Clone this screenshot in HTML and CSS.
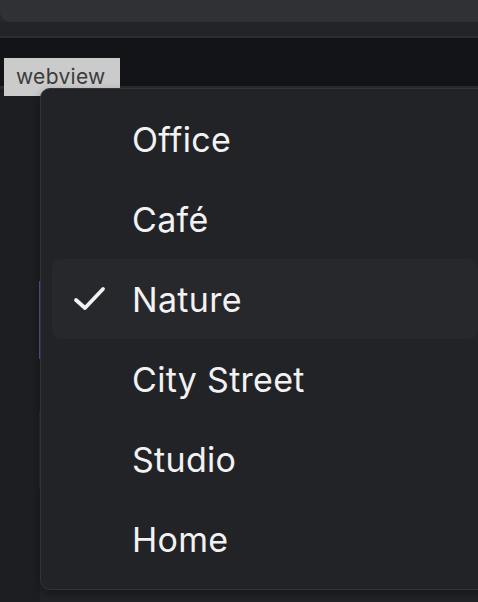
FILE: index.html
```html
<!DOCTYPE html>
<html>
<head>
<meta charset="utf-8">
<link rel="stylesheet" href="styles.css">
</head>
<body>
<div class="page">
  <div class="topcard"></div>
  <div class="band"></div>
  <div class="toolbar"></div>
  <div class="content">
    <div class="side">
      <div class="side-gap1"></div>
      <div class="side-accent"></div>
      <div class="side-gap2"></div>
      <div class="side-faint"></div>
    </div>
    <div class="main"></div>
  </div>
</div>

<div class="tooltip">webview</div>

<div class="menu">
  <div class="item"><span class="check"></span><span class="label">Office</span></div>
  <div class="item"><span class="check"></span><span class="label">Café</span></div>
  <div class="item selected">
    <span class="check"><svg width="34" height="26" viewBox="0 0 34 26"><polyline points="3,14 12,22 30,3" fill="none" stroke="#f2f2f2" stroke-width="3.8" stroke-linecap="round" stroke-linejoin="round"/></svg></span>
    <span class="label">Nature</span>
  </div>
  <div class="item"><span class="check"></span><span class="label">City Street</span></div>
  <div class="item"><span class="check"></span><span class="label">Studio</span></div>
  <div class="item"><span class="check"></span><span class="label">Home</span></div>
</div>
</body>
</html>
```
FILE: styles.css
```css
html, body {
  margin: 0;
  padding: 0;
  background: #1d1e21;
  width: 478px;
  height: 602px;
  overflow: hidden;
  font-family: Inter, "Noto Sans", sans-serif;
}
.page {
  display: flex;
  flex-direction: column;
  height: 602px;
  background: #26272a;
}
.topcard {
  height: 22px;
  background: #2f3134;
  border-bottom-left-radius: 10px;
}
.band {
  height: 14px;
  background: #232427;
  border-bottom: 2px solid #2b2c30;
}
.toolbar {
  height: 48px;
  background: #131417;
  border-bottom: 2px solid #2a2b2f;
}
.content {
  flex: 1;
  display: flex;
  background: #1d1e21;
}
.side {
  width: 40px;
  display: flex;
  flex-direction: column;
  align-items: flex-end;
  background: #1d1e21;
  border-top: 1px solid #26272b;
}
.side-gap1 { height: 192px; }
.side-accent {
  width: 1px;
  height: 78px;
  background: #5b519c;
}
.side-gap2 { height: 52px; }
.side-faint {
  width: 1px;
  height: 78px;
  background: #2a2b2f;
}
.main { flex: 1; background: #222327; }

.tooltip {
  position: absolute;
  left: 4px;
  top: 58px;
  width: 116px;
  height: 38px;
  box-sizing: border-box;
  background: #cbcbcb;
  color: #3c3c3c;
  font-family: Inter, "Noto Sans", sans-serif;
  font-size: 21px;
  letter-spacing: 0.3px;
  line-height: 38px;
  padding-left: 12px;
}

.menu {
  position: absolute;
  left: 40px;
  top: 88px;
  width: 450px;
  height: 502px;
  box-sizing: border-box;
  background: #222327;
  border: 1px solid #333438;
  border-radius: 10px;
  padding: 10px 11px;
  display: flex;
  flex-direction: column;
  box-shadow: 0 4px 10px rgba(0,0,0,0.35);
}
.item {
  height: 80px;
  display: flex;
  align-items: center;
  border-radius: 9px;
  color: #f2f2f3;
  font-size: 34px;
  letter-spacing: 0.3px;
}
.item.selected { background: #27282c; }
.check {
  width: 80px;
  display: flex;
  padding-left: 21px;
  box-sizing: border-box;
  align-items: center;
}
.check svg { display: block; }
.label { line-height: 1; padding-top: 2px; }
```
